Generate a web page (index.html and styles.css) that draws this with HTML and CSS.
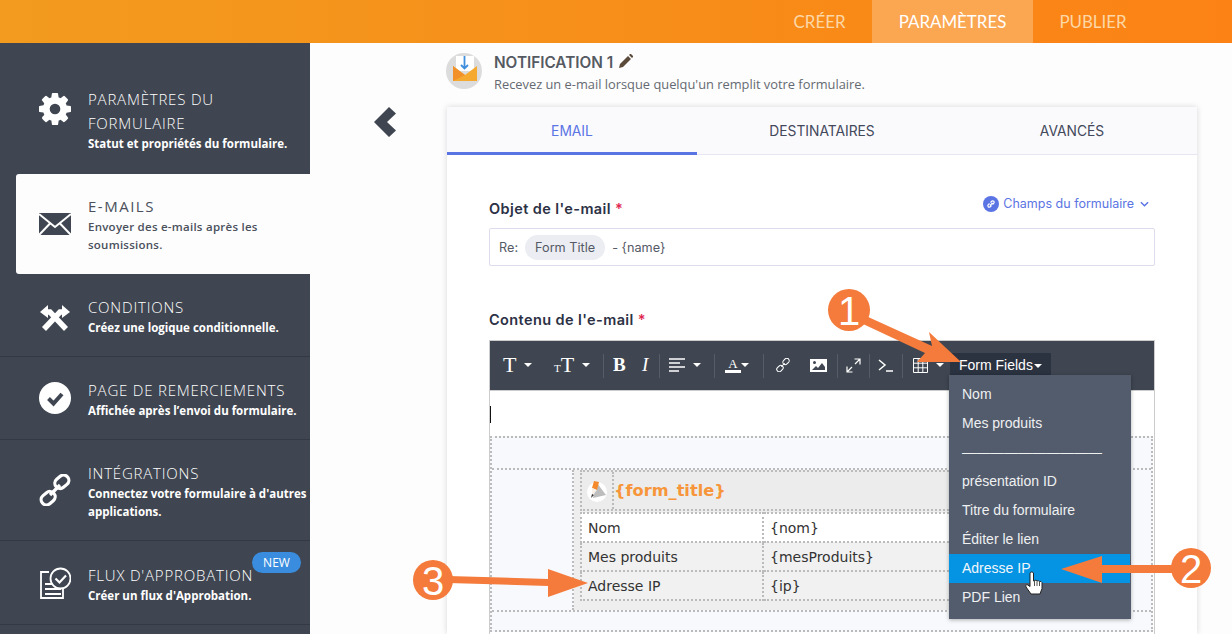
FILE: index.html
```html
<!DOCTYPE html>
<html>

<head>
    <title>Paramètres du formulaire</title>
    <link rel="stylesheet" href="styles.css">
</head>

<body>
    <div class="topbar">
        <a class="navItem">CRÉER</a>
        <a class="navItem navActive">PARAMÈTRES</a>
        <a class="navItem">PUBLIER</a>
    </div>

    <div class="page">
        <div class="sidebar">
            <div class="sideItem sideFirst">
                <svg class="sideIcon" viewBox="0 0 1536 1536"><path fill="#fff" d="M1024 768q0-106-75-181t-181-75-181 75-75 181 75 181 181 75 181-75 75-181zm512-109v222q0 12-8 23t-20 13l-185 28q-19 54-39 91 35 50 107 138 10 12 10 25t-9 23q-27 37-99 108t-94 71q-12 0-26-9l-138-108q-44 23-91 38-16 136-29 186-7 28-36 28h-222q-14 0-24.5-8.5t-11.5-21.5l-28-184q-49-16-90-37l-141 107q-10 9-25 9-14 0-25-11-126-114-165-168-7-10-7-23 0-12 8-23 15-21 51-66.5t54-70.5q-27-50-41-99l-183-27q-13-2-21-12.5t-8-23.5v-222q0-12 8-23t19-13l186-28q14-46 39-92-40-57-107-138-10-12-10-24 0-10 9-23 26-36 98.5-107.5t94.5-71.5q13 0 26 10l138 107q44-23 91-38 16-136 29-186 7-28 36-28h222q14 0 24.5 8.5t11.5 21.5l28 184q49 16 90 37l142-107q9-9 24-9 13 0 25 10 129 119 165 170 7 8 7 22 0 12-8 23-15 21-51 66.5t-54 70.5q26 50 41 98l183 28q13 2 21 12.5t8 23.5z"/></svg>
                <div class="sideText">
                    <div class="sideTitle">PARAMÈTRES DU FORMULAIRE</div>
                    <div class="sideDesc">Statut et propriétés du formulaire.</div>
                </div>
            </div>
            <div class="sideItem sideActive">
                <svg class="sideIcon" viewBox="0 0 32 32"><path fill="#3f4651" d="M0 5h32v22H0z"/><path fill="none" stroke="#fff" stroke-width="2" d="M0 6l16 13L32 6M0 27l11-11.500M32 27L21 15.500"/></svg>
                <div class="sideText">
                    <div class="sideTitle">E-MAILS</div>
                    <div class="sideDesc">Envoyer des e-mails après les soumissions.</div>
                </div>
            </div>
            <div class="sideItem sideLine">
                <svg class="sideIcon" viewBox="0 0 32 32"><path fill="#fff" d="M1 13l8-7v13zM31 13l-8-7v13z"/><path fill="none" stroke="#fff" stroke-width="5.500" d="M8 13h3l16 17M24 13h-3L5 30"/></svg>
                <div class="sideText">
                    <div class="sideTitle">CONDITIONS</div>
                    <div class="sideDesc">Créez une logique conditionnelle.</div>
                </div>
            </div>
            <div class="sideItem sideLine">
                <svg class="sideIcon" viewBox="0 0 32 32"><circle cx="16" cy="16" r="16" fill="#fff"/><path fill="none" stroke="#3f4651" stroke-width="4" d="M9.500 16.500l5 5 8.500-9.500"/></svg>
                <div class="sideText">
                    <div class="sideTitle">PAGE DE REMERCIEMENTS</div>
                    <div class="sideDesc">Affichée après l’envoi du formulaire.</div>
                </div>
            </div>
            <div class="sideItem sideLine">
                <svg class="sideIcon" viewBox="0 0 32 32"><g fill="none" stroke="#fff" stroke-width="3.200"><rect x="15.500" y="2.500" width="15" height="10.500" rx="5.200" transform="rotate(-40 23 8)"/><rect x="1.500" y="19" width="15" height="10.500" rx="5.200" transform="rotate(-40 9 24)"/><path d="M11 21l10-10"/></g></svg>
                <div class="sideText">
                    <div class="sideTitle">INTÉGRATIONS</div>
                    <div class="sideDesc">Connectez votre formulaire à d'autres applications.</div>
                </div>
            </div>
            <div class="sideItem sideLine">
                <svg class="sideIcon" viewBox="0 0 32 32"><g fill="none" stroke="#fff" stroke-width="1.800"><path d="M10 5H2v26h22v-9"/><circle cx="21.500" cy="11.500" r="10"/><path stroke-width="2.200" d="M16.500 11.500l4 4 6.500-7M6 17h7M6 22h16M6 27h16"/></g></svg>
                <div class="sideText">
                    <div class="sideTitle">FLUX D'APPROBATION</div>
                    <div class="sideDesc">Créer un flux d'Approbation.</div>
                </div>
                <span class="badgeNew">NEW</span>
            </div>
        </div>

        <div class="main">
            <div class="backCol">
                <svg class="backIcon" viewBox="0 0 22 30"><path fill="#3f4651" d="M15 0l7 6.500-9 8.500 9 8.500-7 6.500L0 15z"/></svg>
            </div>
            <div class="content">
                <div class="notifHead">
                    <svg class="notifIcon" viewBox="0 0 36 36">
                        <circle cx="18" cy="18" r="18" fill="#dcdcdc"/>
                        <path fill="#fff" d="M10 3h18v15H10z"/>
                        <path fill="#f5a92f" d="M7 13l12 9 12-9v15H7z"/>
                        <path fill="#f2902a" d="M7 13l12 9-12 6z"/>
                        <path fill="none" stroke="#3f8fdc" stroke-width="1.800" d="M18.500 3v12M15 12l3.500 3.500 3.500-3.500"/>
                    </svg>
                    <div class="notifText">
                        <div class="notifTitle">NOTIFICATION 1<svg class="pencil" viewBox="0 0 14 14"><path fill="#5b4a3a" d="M0 14l1-4 8-8 3 3-8 8zM10 1l1-1h1l2 2v1l-1 1z"/></svg></div>
                        <div class="notifSub">Recevez un e-mail lorsque quelqu'un remplit votre formulaire.</div>
                    </div>
                </div>

                <div class="card">
                    <div class="tabs">
                        <div class="tab tabActive">EMAIL</div>
                        <div class="tab">DESTINATAIRES</div>
                        <div class="tab">AVANCÉS</div>
                    </div>
                    <div class="cardBody">
                        <div class="fieldHead">
                            <label class="fieldLabel">Objet de l'e-mail <span class="req">*</span></label>
                            <a class="fieldsLink">
                                <svg class="linkDot" viewBox="0 0 16 16"><circle cx="8" cy="8" r="8" fill="#5b74e4"/><path fill="none" stroke="#fff" stroke-width="1.200" d="M7 9.500l2.500-2.500M6.500 7.500L5 9a1.500 1.500 0 0 0 2 2l1.500-1.500M9.500 8.500L11 7a1.500 1.500 0 0 0-2-2L7.500 6.500"/></svg>
                                Champs du formulaire
                                <svg class="chev" viewBox="0 0 10 6"><path fill="none" stroke="#5b74e4" stroke-width="1.600" d="M1 1l4 4 4-4"/></svg>
                            </a>
                        </div>
                        <div class="subjectBox">
                            <span>Re:</span>
                            <span class="pill">Form Title</span>
                            <span>- {name}</span>
                        </div>

                        <label class="fieldLabel contentLabel">Contenu de l'e-mail <span class="req">*</span></label>
                        <div class="editor">
                            <div class="toolbar">
                                <div class="tool toolFont"><span class="serifT bigT">T</span><i class="caret"></i></div>
                                <div class="tool toolSize"><span class="serifT smallT">T</span><span class="serifT bigT">T</span><i class="caret"></i></div>
                                <i class="sep"></i>
                                <div class="tool toolBold"><span class="serifT boldT">B</span></div>
                                <div class="tool toolItalic"><span class="serifT italicT">I</span></div>
                                <i class="sep"></i>
                                <div class="tool toolAlign">
                                    <svg class="ic16" viewBox="0 0 16 14"><path fill="none" stroke="#fff" stroke-width="1.500" d="M0 1h16M0 5h11M0 9h16M0 13h10"/></svg><i class="caret"></i>
                                </div>
                                <i class="sep"></i>
                                <div class="tool toolColor"><span class="colorA">A</span><i class="caret"></i></div>
                                <i class="sep"></i>
                                <div class="tool toolLink">
                                    <svg class="ic16" viewBox="0 0 16 16"><g fill="none" stroke="#fff" stroke-width="1.200"><rect x="7.500" y="1.200" width="8" height="5.500" rx="2.700" transform="rotate(-45 11.500 4)"/><rect x="0.500" y="9.300" width="8" height="5.500" rx="2.700" transform="rotate(-45 4.500 12)"/><path d="M6 10l4-4"/></g></svg>
                                </div>
                                <div class="tool toolImage">
                                    <svg class="ic17" viewBox="0 0 17 13"><path fill="#fff" d="M0 0h17v13H0z"/><path fill="#3f4651" d="M2 11l4-4 2 2 4-5 3 4v3z"/><circle cx="4.500" cy="3.500" r="1.500" fill="#3f4651"/></svg>
                                </div>
                                <i class="sep"></i>
                                <div class="tool toolExpand">
                                    <svg class="ic15" viewBox="0 0 15 15"><path fill="none" stroke="#fff" stroke-width="1.200" d="M1 14l5-5M14 1L9 6M8.500 1H14v5.500M1 8.500V14h5.500"/></svg>
                                </div>
                                <i class="sep"></i>
                                <div class="tool toolCode">
                                    <svg class="ic15" viewBox="0 0 15 13"><path fill="none" stroke="#fff" stroke-width="1.500" d="M1 1l6 5-6 5M8 12h7"/></svg>
                                </div>
                                <i class="sep"></i>
                                <div class="tool toolTable">
                                    <svg class="ic15" viewBox="0 0 15 15"><path fill="none" stroke="#fff" d="M.500.500h14v14H.500zM.500 5.200h14M.500 9.800h14M5.200.500v14M9.800.500v14"/></svg><i class="caret"></i>
                                </div>
                                <div class="fieldsBtn">Form Fields<i class="caret caretTight"></i></div>
                            </div>

                            <div class="fieldsMenu">
                                <div class="menuItem">Nom</div>
                                <div class="menuItem">Mes produits</div>
                                <div class="menuItem">——————————</div>
                                <div class="menuItem">présentation ID</div>
                                <div class="menuItem">Titre du formulaire</div>
                                <div class="menuItem">Éditer le lien</div>
                                <div class="menuItem menuHover">Adresse IP</div>
                                <div class="menuItem">PDF Lien</div>
                            </div>

                            <div class="editArea">
                                <i class="textCursor"></i>
                                <div class="mailOuter">
                                    <div class="mailBand"></div>
                                    <div class="mailMiddle">
                                        <div class="mailSide"></div>
                                        <div class="mailInner">
                                            <div class="titleRow">
                                                <div class="logoCell">
                                                    <svg class="formLogo" viewBox="0 0 22 22"><circle cx="11" cy="12" r="10" fill="#fff"/><path fill="#bdbdbd" d="M11 3l9 12-13 3z"/><path fill="#f58a2c" d="M8 1l5 1-2 8-5-2z"/><path fill="#f6f0e8" d="M6 8l5 2-5 6z"/><path fill="#333" d="M6 14l2 1-3 3z"/></svg>
                                                </div>
                                                <div class="formTitle">{form_title}</div>
                                            </div>
                                            <table class="dataTable">
                                                <tr class="rowWhite"><td class="colName">Nom</td><td>{nom}</td></tr>
                                                <tr><td class="colName">Mes produits</td><td>{mesProduits}</td></tr>
                                                <tr><td class="colName">Adresse IP</td><td>{ip}</td></tr>
                                            </table>
                                        </div>
                                        <div class="mailSide sideRight"></div>
                                    </div>
                                    <div class="mailBand"></div>
                                </div>
                            </div>
                        </div>
                    </div>
                </div>
            </div>
        </div>
    </div>

    <!-- annotations drawn on top of the screenshot -->
    <svg class="notes" viewBox="0 0 1232 634">
        <g fill="#f47b3b">
            <path d="M866 316l66 30-3-14 32 30-44 0 8-9-62-29z"/>
            <path d="M1061 569l41-13 0 9 75 0 0 8-75 0 0 10z"/>
            <path d="M588 583l-40-14 0 10-100-3 0 7 100 3 0 11z"/>
            <circle cx="849" cy="310" r="21"/>
            <circle cx="1191" cy="568" r="20"/>
            <circle cx="433" cy="580" r="20"/>
        </g>
        <g class="noteNum">
            <text x="849" y="325">1</text>
            <text x="1191" y="583">2</text>
            <text x="433" y="595">3</text>
        </g>
        <path fill="#fff" stroke="#222" stroke-width="1" d="M1030 573a2 2 0 0 1 3.500 0v8l1-.500a2 2 0 0 1 2.500.500 2 2 0 0 1 2.500.500 2 2 0 0 1 2.500 1v6l-2 5.500h-9l-5-7q-1-2 1-2.500l3 2z"/>
        <path fill="none" stroke="#222" stroke-width=".8" d="M1034.500 581v5M1037 581.500v4.500M1039.500 582v4"/>
    </svg>
</body>

</html>
```

FILE: styles.css
```css
* {
    box-sizing: border-box;
}

html,
body {
    margin: 0;
    height: 634px;
    overflow: hidden;
}

body {
    position: relative;
    background: #fdfdfd;
    font-family: "Open Sans", sans-serif;
}

.topbar {
    display: flex;
    justify-content: flex-end;
    height: 43px;
    padding-right: 79px;
    background: linear-gradient(90deg, #f29b1e, #fc8215);
}

.navItem {
    width: 105px;
    font-family: Lato, sans-serif;
    font-size: 16.900px;
    line-height: 43px;
    text-align: center;
    color: #fdd7a6;
}

.navActive {
    width: 161px;
    background: #fba650;
    color: #fff;
}

.navItem:last-child {
    width: 120px;
}

.page {
    display: flex;
    height: 591px;
}

/* left menu */
.sidebar {
    flex: none;
    width: 310px;
    background: #3f4651;
}

.sideItem {
    position: relative;
    display: flex;
    align-items: center;
    padding-left: 39px;
    color: #fff;
}

.sideFirst {
    height: 131px;
}

.sideActive {
    height: 100px;
    margin-left: 16px;
    padding-left: 23px;
    border-radius: 3px 0 0 3px;
    background: #fdfdfd;
    color: #4a505c;
}

.sideLine {
    height: 83px;
    border-bottom: 1px solid #343a45;
}

.sideLine:nth-child(5) {
    height: 101px;
}

.sideLine:nth-child(6) {
    height: 84px;
}

.sideIcon {
    flex: none;
    width: 32px;
    height: 32px;
    margin-right: 17px;
}

.sideText {
    min-width: 0;
    padding-top: 2px;
}

.sideFirst .sideText {
    padding-top: 23px;
}

.sideActive .sideText {
    padding-top: 0;
}

.sideTitle {
    font-size: 15px;
    font-weight: 300;
    line-height: 24px;
    letter-spacing: 0.8px;
}

.sideActive .sideTitle {
    font-weight: 400;
    letter-spacing: 1.5px;
}

.sideDesc {
    font-size: 11.500px;
    font-weight: 700;
    line-height: 18px;
}

.sideActive .sideDesc {
    font-weight: 600;
    letter-spacing: 0.25px;
}

.badgeNew {
    position: absolute;
    left: 252px;
    top: 11px;
    width: 49px;
    height: 21px;
    border-radius: 11px;
    background: #3a8dde;
    font-size: 12px;
    line-height: 21px;
    text-align: center;
}

/* main column */
.main {
    display: flex;
    flex: 1;
    min-width: 0;
}

.backCol {
    flex: none;
    width: 137px;
    padding: 64px 0 0 64px;
}

.backIcon {
    display: block;
    width: 22px;
    height: 30px;
}

.content {
    width: 750px;
    padding-top: 10px;
}

.notifHead {
    display: flex;
    align-items: center;
    height: 36px;
    margin-left: -1px;
    margin-bottom: 18px;
}

.notifIcon {
    flex: none;
    width: 36px;
    height: 36px;
    margin-right: 12px;
}

.notifText {
    padding-top: 5px;
}

.notifTitle {
    font-family: Inter, sans-serif;
    font-size: 15.300px;
    font-weight: 600;
    line-height: 18px;
    color: #555a62;
}

.pencil {
    width: 14px;
    height: 14px;
    margin-left: 6px;
}

.notifSub {
    margin-top: 3px;
    font-size: 12.850px;
    line-height: 18px;
    color: #656a72;
}

.card {
    height: 527px;
    background: #fff;
    box-shadow: 0 0 6px rgba(0, 0, 0, 0.15);
    font-family: Inter, sans-serif;
}

.tabs {
    display: flex;
    height: 48px;
    border-bottom: 1px solid #e6e7f2;
    background: #fafafd;
}

.tab {
    flex: 1;
    height: 48px;
    font-size: 13.800px;
    line-height: 48px;
    text-align: center;
    color: #43485a;
}

.tabActive {
    border-bottom: 3px solid #5b74e4;
    color: #5b74e4;
}

.cardBody {
    padding: 40px 42px 0;
}

.fieldHead {
    display: flex;
    justify-content: space-between;
    height: 33px;
}

.fieldLabel {
    font-size: 14.500px;
    font-weight: 600;
    line-height: 28px;
    letter-spacing: 0.4px;
    color: #2c3145;
}

.req {
    color: #e0284f;
}

.fieldsLink {
    display: flex;
    align-items: center;
    gap: 4px;
    height: 17px;
    margin-right: 6px;
    font-size: 12.500px;
    color: #5b74e4;
}

.linkDot {
    width: 16px;
    height: 16px;
}

.chev {
    width: 9px;
    height: 6px;
    margin-left: 2px;
}

.subjectBox {
    display: flex;
    align-items: center;
    gap: 7px;
    height: 38px;
    padding-left: 9px;
    border: 1px solid #dcdcec;
    border-radius: 2px;
    font-size: 12.700px;
    color: #555a66;
}

.pill {
    height: 25px;
    padding: 0 10px;
    border-radius: 13px;
    background: #ecedf3;
    line-height: 25px;
}

.contentLabel {
    display: block;
    margin-top: 40px;
    margin-bottom: 6px;
}

/* editor */
.editor {
    position: relative;
    height: 294px;
    border-left: 1px solid #ccc;
    border-right: 1px solid #ccc;
}

.toolbar {
    display: flex;
    align-items: center;
    height: 51px;
    padding-left: 13px;
    border-top: 1px solid #ccc;
    border-bottom: 1px solid #ccc;
    background: #3f4651;
    color: #fff;
}

.tool {
    display: flex;
    flex: none;
    align-items: center;
    height: 24px;
    margin-top: -1px;
}

.toolFont { width: 51px; }
.toolSize { width: 49px; }
.toolBold { width: 29px; }
.toolItalic { width: 17px; }
.toolAlign { width: 45px; }
.toolColor { width: 39px; padding-left: 1px; }
.toolLink { width: 37px; padding-left: 2px; }
.toolImage { width: 27px; }
.toolExpand { width: 23px; margin-left: -1px; }
.toolCode { width: 24px; margin-left: -1px; }
.toolTable { width: 38px; padding-left: 1px; }

.sep {
    flex: none;
    width: 1px;
    height: 24px;
    margin-right: 9px;
    background: #565d69;
}

.serifT {
    font-family: "Liberation Serif", serif;
    line-height: 24px;
}

.bigT {
    font-size: 22px;
}

.smallT {
    margin-top: 5px;
    font-size: 11px;
}

.boldT {
    font-size: 19px;
    font-weight: 700;
}

.italicT {
    font-size: 19px;
    font-style: italic;
}

.colorA {
    width: 16px;
    border-bottom: 3px solid #fff;
    font-family: "Liberation Serif", serif;
    font-size: 13px;
    line-height: 13px;
    text-align: center;
}

.caret {
    flex: none;
    width: 0;
    height: 0;
    margin-left: 8px;
    border-top: 4px solid #fff;
    border-left: 4px solid transparent;
    border-right: 4px solid transparent;
}

.toolColor .caret {
    margin-left: 0;
}

.caretTight {
    display: inline-block;
    margin-left: 1px;
    vertical-align: 2px;
}

.ic16 {
    width: 16px;
    height: 14px;
}

.ic17 {
    width: 17px;
    height: 13px;
}

.ic15 {
    width: 15px;
    height: 15px;
}

.fieldsBtn {
    flex: none;
    width: 101px;
    height: 23px;
    margin-top: -2px;
    padding-left: 9px;
    background: #2b3240;
    font-family: "Liberation Sans", sans-serif;
    font-size: 14px;
    line-height: 24px;
}

.fieldsMenu {
    position: absolute;
    z-index: 2;
    left: 459px;
    top: 35px;
    width: 182px;
    height: 244px;
    padding-top: 5px;
    background: #535c6c;
    box-shadow: 0 1px 4px rgba(0, 0, 0, 0.3);
    font-family: "Liberation Sans", sans-serif;
    font-size: 14px;
}

.menuItem {
    height: 29px;
    padding-left: 13px;
    line-height: 29px;
    color: #eef0f2;
}

.menuHover {
    margin-right: 1px;
    background: #0494e3;
    color: #f2f6fa;
}

.editArea {
    position: relative;
    padding-top: 45px;
}

.textCursor {
    position: absolute;
    left: 0;
    top: 15px;
    width: 1px;
    height: 17px;
    background: #111;
}

.mailOuter {
    height: 196px;
    margin-right: 1px;
    border: 2px dotted #bbb;
    background: #f8f9fd;
}

.mailBand {
    height: 30px;
}

.mailMiddle {
    display: flex;
    height: 144px;
    border-top: 2px dotted #bbb;
    border-bottom: 2px dotted #bbb;
}

.mailSide {
    flex: none;
    width: 82px;
    border-right: 2px dotted #bbb;
}

.sideRight {
    flex: 1;
    border-right: 0;
    border-left: 2px dotted #bbb;
}

.mailInner {
    flex: none;
    width: 468px;
    padding: 0 6px;
    background: #eee;
}

.titleRow {
    display: flex;
    height: 41px;
    border: 2px dotted #bbb;
    background: #ececec;
}

.logoCell {
    display: flex;
    align-items: center;
    justify-content: center;
    width: 32px;
    border-right: 2px dotted #bbb;
}

.formLogo {
    width: 22px;
    height: 22px;
}

.formTitle {
    font-family: "DejaVu Sans", sans-serif;
    font-size: 16.200px;
    font-weight: 700;
    line-height: 38px;
    color: #f7953a;
}

.dataTable {
    width: 100%;
    margin-top: 1px;
    border-collapse: collapse;
    border: 2px dotted #bbb;
    background: #f1f1f1;
    font-family: "DejaVu Sans", sans-serif;
    font-size: 14px;
    color: #333;
}

.dataTable td {
    height: 29px;
    padding: 0 6px;
    border: 2px dotted #bbb;
}

.rowWhite {
    background: #fff;
}

.colName {
    width: 182px;
}

/* annotations */
.notes {
    position: absolute;
    z-index: 5;
    left: 0;
    top: 0;
    width: 1232px;
    height: 634px;
    pointer-events: none;
}

.noteNum {
    font-family: "Liberation Sans", sans-serif;
    font-size: 40px;
    fill: #fff;
    text-anchor: middle;
}
```
